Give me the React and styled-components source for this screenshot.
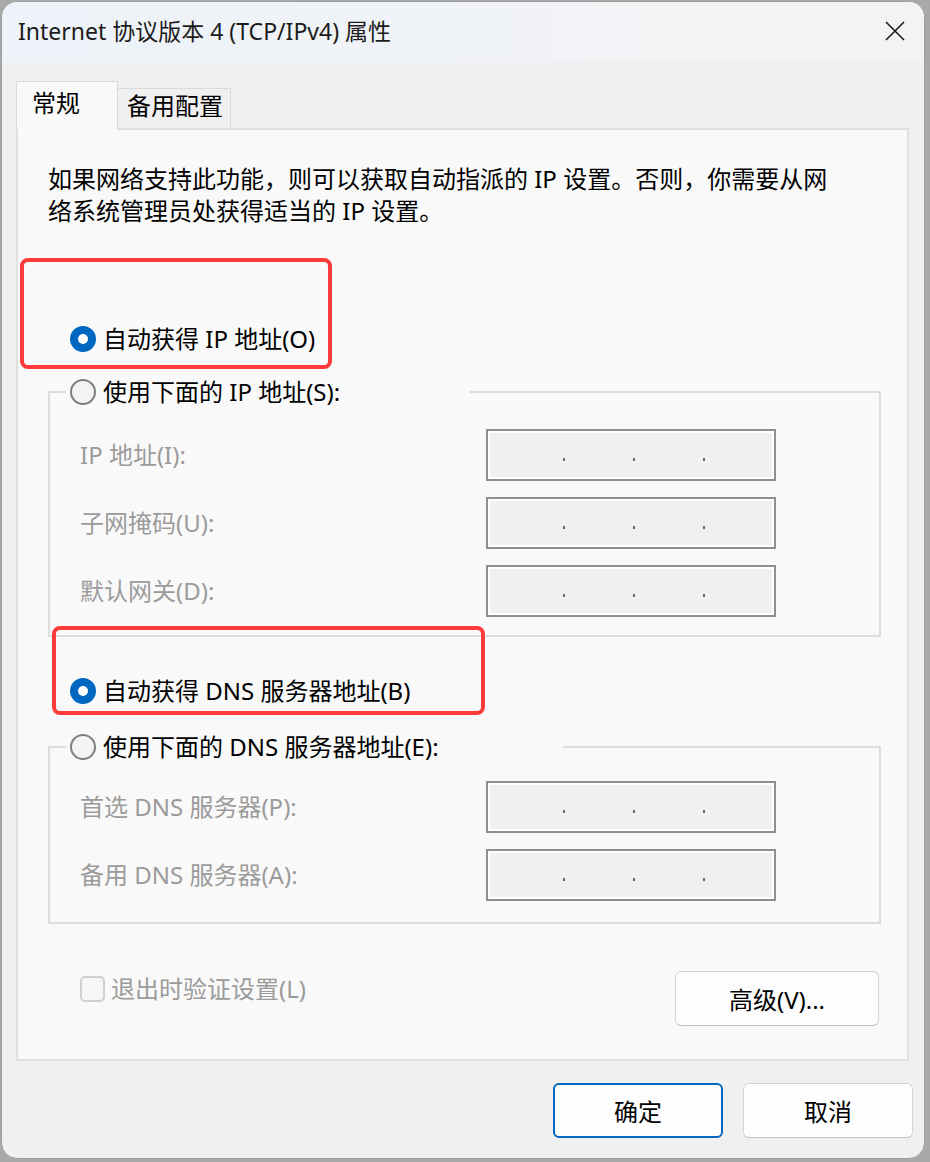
import React from "react";
import styled, { createGlobalStyle } from "styled-components";

const GlobalStyle = createGlobalStyle`
  html, body {
    margin: 0;
    padding: 0;
  }
  body {
    background: #a9a9a9;
    font-family: "Noto Sans", "Noto Sans CJK SC", sans-serif;
  }
`;

const Window = styled.div`
  box-sizing: border-box;
  width: 924px;
  height: 1158px;
  margin: 1px 0 0 1px;
  background: #f0f0f0;
  border: 1px solid #9c9c9c;
  border-radius: 16px;
  overflow: hidden;
  display: flex;
  flex-direction: column;
`;

const TitleBar = styled.div`
  height: 60px;
  flex-shrink: 0;
  display: flex;
  align-items: center;
  justify-content: space-between;
  padding: 0 19px 0 16px;
  background: linear-gradient(90deg, #edf3f9 0%, #f1f3f6 60%, #f3f3f3 100%);
`;

const Title = styled.div`
  font-size: 23px;
  color: #1b1b1b;
  line-height: 30px;
  margin-top: -2px;
`;

const CloseButton = styled.div`
  display: flex;
  width: 20px;
  height: 20px;
  margin-top: -2px;
`;

const Body = styled.div`
  padding: 19px 15px 0 14px;
`;

const Tabs = styled.div`
  display: flex;
  align-items: flex-end;
  position: relative;
  z-index: 1;
  margin-bottom: -2px;
`;

const Tab = styled.div`
  box-sizing: border-box;
  width: ${(p) => (p.$active ? "102px" : "113px")};
  height: ${(p) => (p.$active ? "49px" : "40px")};
  margin-bottom: ${(p) => (p.$active ? "0" : "2px")};
  padding: ${(p) => (p.$active ? "5px 0 0 15px" : "1px 0 0 9px")};
  border: 1px solid #dadada;
  border-left: ${(p) => (p.$active ? "1px solid #dadada" : "none")};
  border-bottom: none;
  background: ${(p) => (p.$active ? "#f9f9f9" : "#f0f0f0")};
  font-size: 24px;
  line-height: 32px;
  color: #000;
`;

const Panel = styled.div`
  position: relative;
  box-sizing: border-box;
  border: 2px solid #e0e0e0;
  background: #f9f9f9;
  padding: 34px 26px 33px 30px;
`;

const Intro = styled.div`
  max-width: 792px;
  font-size: 24px;
  line-height: 32px;
  color: #000;
  margin-top: -1px;
`;

const Option = styled.label`
  display: flex;
  align-items: center;
  gap: 7px;
  font-size: 24px;
  line-height: 32px;
  color: ${(p) => (p.$disabled ? "#9b9b9b" : "#000")};
  margin: ${(p) => p.$margin || "0"};
  white-space: nowrap;
`;

const Radio = styled.span`
  position: relative;
  box-sizing: border-box;
  width: 26px;
  height: 26px;
  border-radius: 50%;
  flex-shrink: 0;
  background: ${(p) => (p.$checked ? "#0067c0" : "#f3f3f3")};
  border: ${(p) => (p.$checked ? "none" : "2px solid #7f7f7f")};

  &::after {
    content: "";
    display: ${(p) => (p.$checked ? "block" : "none")};
    position: absolute;
    left: 8px;
    top: 8px;
    width: 10px;
    height: 10px;
    border-radius: 50%;
    background: #fff;
  }
`;

const Checkbox = styled.span`
  box-sizing: border-box;
  width: 25px;
  height: 26px;
  border: 2px solid #cfcfcf;
  border-radius: 5px;
  background: #f6f6f6;
  flex-shrink: 0;
  margin-right: -1px;
`;

const Group = styled.fieldset`
  margin: ${(p) => p.$top} 0 0;
  min-width: 0;
  border: 2px solid #dcdcdc;
  padding: ${(p) => p.$pad};
`;

const Legend = styled.legend`
  box-sizing: border-box;
  width: ${(p) => p.$width};
  padding: 0 4px;
`;

const Fields = styled.div`
  display: flex;
  flex-direction: column;
  gap: 16px;
  padding-left: 14px;
`;

const FieldRow = styled.div`
  display: flex;
  align-items: center;
`;

const FieldLabel = styled.div`
  width: 406px;
  font-size: 24px;
  line-height: 32px;
  color: #9b9b9b;
`;

const AddressBox = styled.div`
  box-sizing: border-box;
  width: 290px;
  height: 52px;
  border: 2px solid #8f8f8f;
  box-shadow: inset 0 0 0 2px #ffffff;
  background: #f0f0f0;
  display: flex;
  align-items: center;
  gap: 68px;
  padding-left: 75px;
`;

const Dot = styled.span`
  width: 2px;
  height: 3px;
  margin-top: 8px;
  background: #5f6a7a;
`;

const BottomRow = styled.div`
  display: flex;
  justify-content: space-between;
  align-items: flex-start;
  margin-top: 47px;
`;

const Button = styled.div`
  box-sizing: border-box;
  width: ${(p) => p.$width || "170px"};
  height: 55px;
  display: flex;
  align-items: center;
  justify-content: center;
  border-radius: 6px;
  background: #fdfdfd;
  border: ${(p) => (p.$primary ? "2px solid #0067c0" : "1px solid #d2d2d2")};
  border-bottom-color: ${(p) => (p.$primary ? "#0067c0" : "#c2c2c2")};
  font-size: 24px;
  color: #000;
  margin-right: ${(p) => p.$right || "0"};
`;

const Footer = styled.div`
  display: flex;
  justify-content: flex-end;
  gap: 20px;
  padding: 22px 11px 0 0;
`;

const Marker = styled.div`
  position: absolute;
  box-sizing: border-box;
  left: ${(p) => p.$x}px;
  top: ${(p) => p.$y}px;
  width: ${(p) => p.$w}px;
  height: ${(p) => p.$h}px;
  border: 4px solid #fd3b3b;
  border-radius: 8px;
  pointer-events: none;
`;

function Address() {
  return (
    <AddressBox>
      <Dot />
      <Dot />
      <Dot />
    </AddressBox>
  );
}

function Field({ label }) {
  return (
    <FieldRow>
      <FieldLabel>{label}</FieldLabel>
      <Address />
    </FieldRow>
  );
}

export default function App() {
  return (
    <>
      <GlobalStyle />
      <Window>
        <TitleBar>
          <Title>Internet 协议版本 4 (TCP/IPv4) 属性</Title>
          <CloseButton>
            <svg width="20" height="20" viewBox="0 0 20 20">
              <path d="M1 1 L19 19 M19 1 L1 19" stroke="#1b1b1b" strokeWidth="1.6" fill="none" />
            </svg>
          </CloseButton>
        </TitleBar>
        <Body>
          <Tabs>
            <Tab $active>常规</Tab>
            <Tab>备用配置</Tab>
          </Tabs>
          <Panel>
            <Intro>
              如果网络支持此功能，则可以获取自动指派的 IP 设置。否则，你需要从网络系统管理员处获得适当的 IP 设置。
            </Intro>

            <Option $margin="96px 0 0 22px">
              <Radio $checked />
              自动获得 IP 地址(O)
            </Option>

            <Group $top="21px" $pad="21px 0 18px 16px">
              <Legend $width="404px">
                <Option>
                  <Radio />
                  使用下面的 IP 地址(S):
                </Option>
              </Legend>
              <Fields>
                <Field label="IP 地址(I):" />
                <Field label="子网掩码(U):" />
                <Field label="默认网关(D):" />
              </Fields>
            </Group>

            <Option $margin="38px 0 0 22px">
              <Radio $checked />
              自动获得 DNS 服务器地址(B)
            </Option>

            <Group $top="24px" $pad="18px 0 21px 16px">
              <Legend $width="497px">
                <Option>
                  <Radio />
                  使用下面的 DNS 服务器地址(E):
                </Option>
              </Legend>
              <Fields>
                <Field label="首选 DNS 服务器(P):" />
                <Field label="备用 DNS 服务器(A):" />
              </Fields>
            </Group>

            <BottomRow>
              <Option $disabled $margin="2px 0 0 32px">
                <Checkbox />
                退出时验证设置(L)
              </Option>
              <Button $width="204px" $right="2px">高级(V)...</Button>
            </BottomRow>

            <Marker $x={2} $y={128} $w={312} $h={111} />
            <Marker $x={34} $y={496} $w={433} $h={89} />
          </Panel>
        </Body>
        <Footer>
          <Button $primary>确定</Button>
          <Button>取消</Button>
        </Footer>
      </Window>
    </>
  );
}
